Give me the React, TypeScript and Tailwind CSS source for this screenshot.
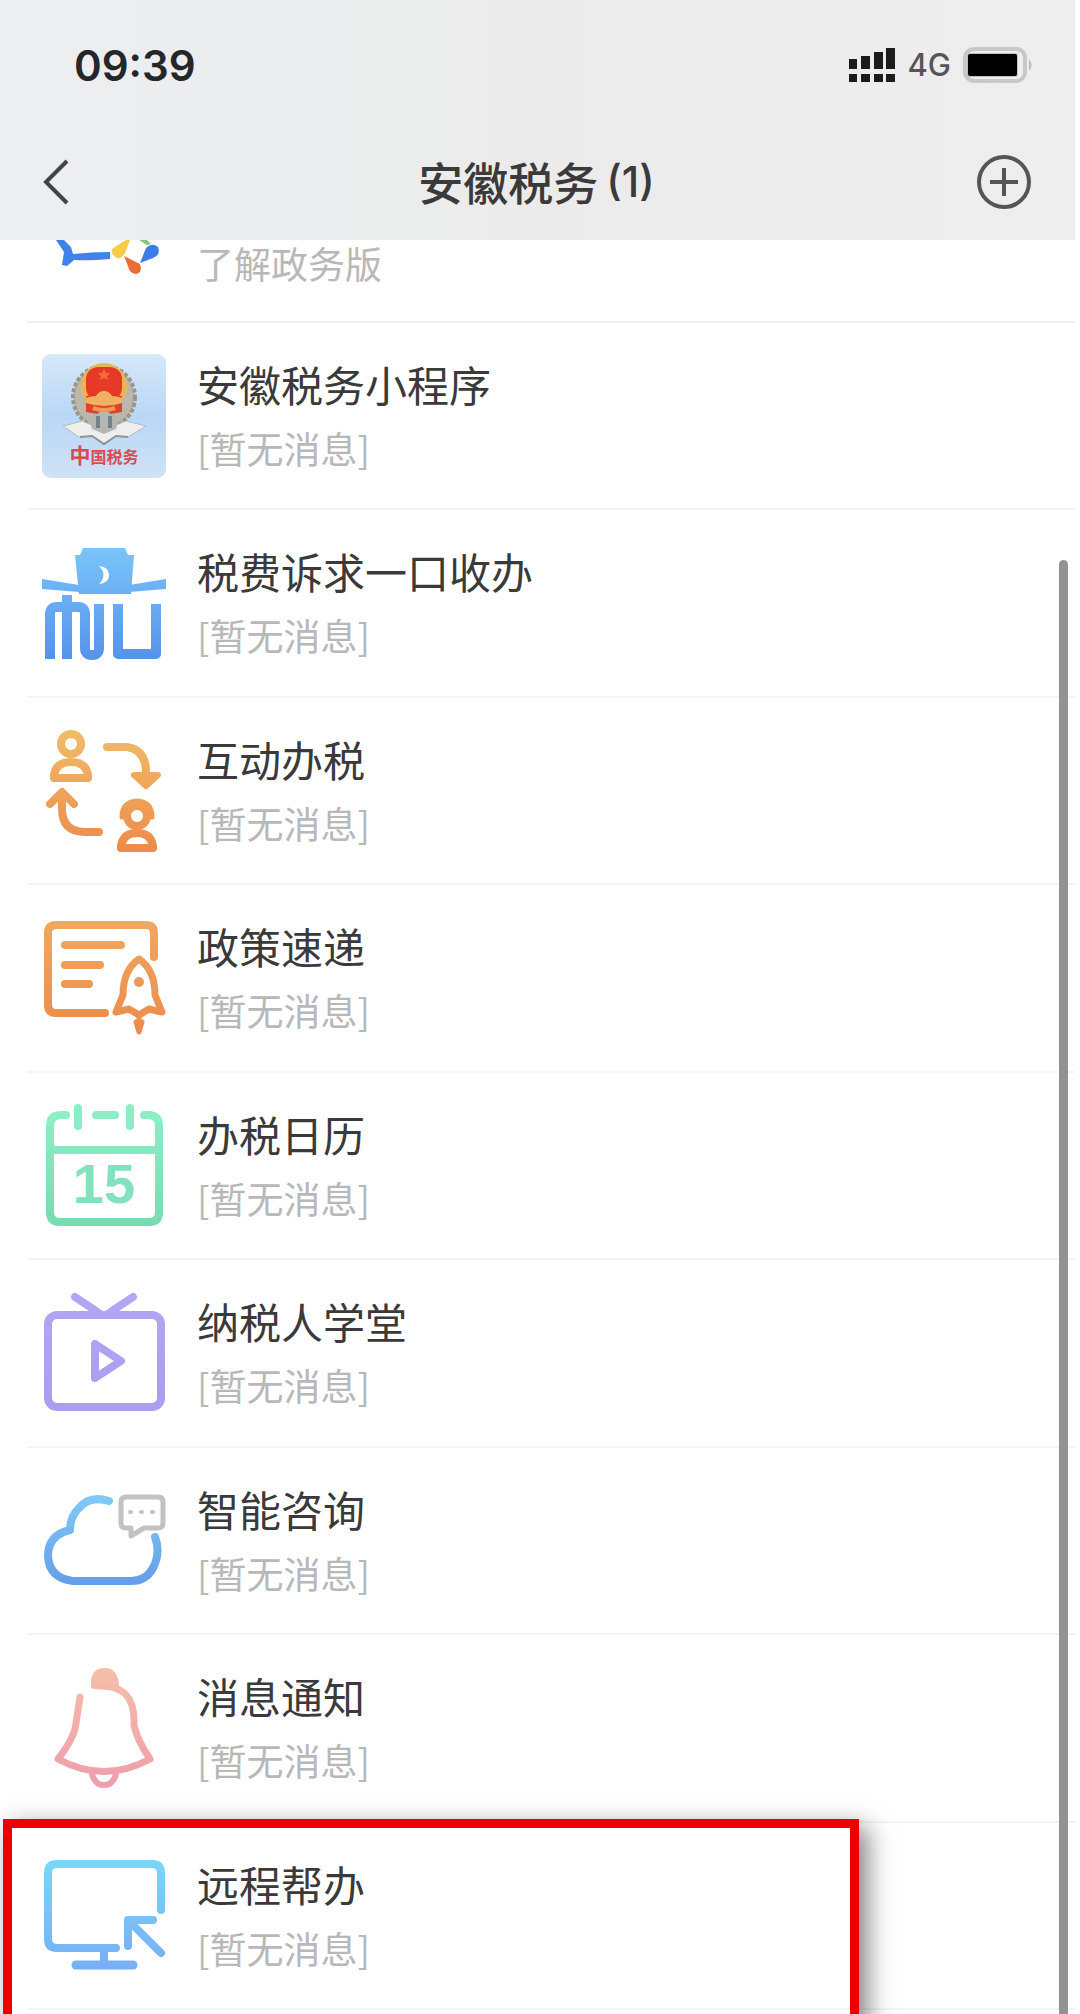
import type { ReactNode } from "react";

interface IService {
  name: string;
  icon: ReactNode;
  highlighted?: boolean;
}

interface IIconProps {
  id: string;
  from: string;
  to: string;
  children: ReactNode;
}

// Line icon with a vertical gradient stroke
function LineIcon({ id, from, to, children }: IIconProps) {
  return (
    <svg
      className="size-full overflow-visible"
      viewBox="0 0 124 124"
      fill="none"
      stroke={`url(#${id})`}
      strokeWidth="8"
      strokeLinecap="round"
      strokeLinejoin="round"
      aria-hidden="true"
    >
      <defs>
        <linearGradient id={id} gradientUnits="userSpaceOnUse" x1="0" y1="0" x2="0" y2="124">
          <stop offset="0" stopColor={from} />
          <stop offset="1" stopColor={to} />
        </linearGradient>
      </defs>
      {children}
    </svg>
  );
}

function EmblemIcon() {
  return (
    <svg className="size-full" viewBox="0 0 124 124" aria-hidden="true">
      <defs>
        <linearGradient id="sky" x1="0" y1="0" x2="0" y2="1">
          <stop offset="0" stopColor="#d6e8f9" />
          <stop offset="0.5" stopColor="#b9d7f6" />
          <stop offset="1" stopColor="#cfe2f5" />
        </linearGradient>
      </defs>
      <rect width="124" height="124" rx="9" fill="url(#sky)" />
      <circle cx="62" cy="43" r="31" fill="#bdb6aa" stroke="#9a948a" strokeWidth="4" strokeDasharray="4 2" />
      <path d="M21 72 40 67 62 76 84 67 104 72 86 83 74 82 62 90 50 82 37 83Z" fill="#eeeeec" stroke="#b4bbc2" strokeWidth="1" />
      <path d="m38 83 12-1 12 8 12-8 12 1" fill="none" stroke="#8b949d" strokeWidth="2" />
      <path d="M46 60h32l-4 15-12 5-12-5Z" fill="#b5b5b2" />
      <path d="M56 62v12M68 62v12" stroke="#74808a" strokeWidth="4" />
      <circle cx="62" cy="32" r="23" fill="#edb552" />
      <path d="M44 42h36v16l-11 2-7-5-7 5-11-2Z" fill="#dc432f" />
      <rect x="44" y="13" width="36" height="33" rx="12" fill="#e63a26" />
      <path d="m62 15 2 4h4l-3 3 1 4-4-2-4 2 1-4-3-3h4Z" fill="#ee6c38" />
      <path d="M44 44q6-2 10-2 3-5 8-5t8 5q4 0 10 2v5q-18 6-36 0Z" fill="#f2b062" />
      <path d="M51 54q11 4 22 0" fill="none" stroke="#f09a4e" strokeWidth="4" />
      <text
        x="62"
        y="109"
        textAnchor="middle"
        fontSize="16"
        fontWeight="700"
        fontFamily="'Noto Sans CJK SC', sans-serif"
        fill="#d94b50"
      >
        <tspan fontSize="21">中</tspan>国税务
      </text>
    </svg>
  );
}

function OfficialHatIcon() {
  return (
    <LineIcon id="hat" from="#7cc8fa" to="#5390ea">
      <g fill="url(#hat)" stroke="none">
        <path d="M41 7h42l3 7h6l-3 39H37L33 14h5Z" />
        <path d="M0 38 37 44v7L0 48ZM124 38 87 44v7l37-3Z" />
      </g>
      <path d="M57 25q9 9 0 18 10-1 10-9t-10-9Z" fill="#fff" stroke="none" />
      <g strokeWidth="10" strokeLinecap="butt">
        <path d="M8 118V73q0-7 7-7h21q7 0 7 7v34q0 7 7 7t7-7V63" />
        <path d="M25 54v64M76 63v50h38V63" />
      </g>
    </LineIcon>
  );
}

function InteractIcon() {
  return (
    <LineIcon id="interact" from="#f0bd69" to="#ed8a4a">
      <circle cx="29" cy="15" r="10" />
      <path d="M12 49v-3q2-13 17-13t17 13v3Z" />
      <path d="M65 18h20q20 3 19 28" />
      <path d="M92 46h24l-12 11Z" fill="url(#interact)" strokeWidth="6" />
      <path d="M57 103H42Q20 102 20 80V66M8 75l12-12 12 12" />
      <circle cx="95" cy="87" r="10" />
      <path d="M80 88q0-15 15-16 15 1 15 16" strokeWidth="5" />
      <path d="M79 119v-2q2-13 16-13t16 13v2Z" />
    </LineIcon>
  );
}

function PolicyIcon() {
  return (
    <LineIcon id="policy" from="#f0aa62" to="#ec8949">
      <path d="M63 97H14q-8 0-8-8V17q0-8 8-8h90q8 0 8 8v24" />
      <path d="M23 29h56M23 49h35M23 68h24" />
      <path d="M97 43q-16 11-16 36l-7 17 13-3 10 6 10-6 13 3-7-17q0-25-16-36Z" strokeWidth="7" />
      <circle cx="97" cy="66" r="5" fill="url(#policy)" stroke="none" />
      <path d="M97 100v8M94 106h6l-3 10Z" fill="url(#policy)" strokeWidth="5" />
    </LineIcon>
  );
}

function CalendarIcon() {
  return (
    <LineIcon id="calendar" from="#8df0c8" to="#78dab0">
      <path d="M24 11h-5Q8 11 8 22v86q0 10 10 10h89q10 0 10-10V22q0-11-11-11h-4" />
      <path d="M54 11h19M8 46h109M36 4v18M88 4v18" />
      <text
        x="62"
        y="99"
        textAnchor="middle"
        fontSize="56"
        fontWeight="700"
        fontFamily="'Liberation Sans', sans-serif"
        fill="#82e2bd"
        stroke="none"
      >
        15
      </text>
    </LineIcon>
  );
}

function ClassroomIcon() {
  return (
    <LineIcon id="classroom" from="#b5a5f4" to="#ab9cf0">
      <rect x="6" y="24" width="113" height="92" rx="9" />
      <path d="m33 6 24 16M91 6 67 22" />
      <path d="M53 53v34l26-17Z" />
    </LineIcon>
  );
}

function CloudIcon() {
  return (
    <LineIcon id="cloud" from="#84d2fb" to="#6094e4">
      <path d="M67 22Q48 16 37 29q-9 9-9 22Q6 56 6 77q1 22 25 25h58q15 0 22-13 8-15 2-31" />
      <g stroke="#c2c2c2">
        <path d="M84 18h32q5 0 5 5v21q0 5-5 5h-14l-13 8v-8h-5q-5 0-5-5V23q0-5 5-5Z" strokeWidth="5" />
        <path d="M88 33h1M99 33h1M110 33h1" strokeWidth="4" />
      </g>
    </LineIcon>
  );
}

function BellIcon() {
  return (
    <LineIcon id="bell" from="#f5c0a8" to="#ee9cae">
      <path d="M52 20q-1-15 10-15t12 14Z" fill="url(#bell)" strokeWidth="6" />
      <path d="M56 20q38-2 36 39 3 15 16 34-46 25-92 0 17-22 18-36l4-26" strokeWidth="7" />
      <path d="M50 108q3 11 12 11t12-11" strokeWidth="6" />
    </LineIcon>
  );
}

function RemoteIcon() {
  return (
    <LineIcon id="remote" from="#78daf7" to="#78aaf5">
      <path d="M74 94H15q-9 0-9-9V19q0-9 9-9h95q9 0 9 9v37" />
      <path d="M62 94v15" />
      <path d="M34 111h57" strokeWidth="9" />
      <path d="M111 66H86v26M87 67l32 32" />
    </LineIcon>
  );
}

const services: IService[] = [
  { name: "安徽税务小程序", icon: <EmblemIcon /> },
  { name: "税费诉求一口收办", icon: <OfficialHatIcon /> },
  { name: "互动办税", icon: <InteractIcon /> },
  { name: "政策速递", icon: <PolicyIcon /> },
  { name: "办税日历", icon: <CalendarIcon /> },
  { name: "纳税人学堂", icon: <ClassroomIcon /> },
  { name: "智能咨询", icon: <CloudIcon /> },
  { name: "消息通知", icon: <BellIcon /> },
  { name: "远程帮办", icon: <RemoteIcon />, highlighted: true },
];

function StatusBar() {
  return (
    <div className="flex h-[130px] items-center justify-between pl-[74px] pr-[41px]">
      <span className="font-['Inter',sans-serif] text-[42px] font-semibold text-[#24262a]">09:39</span>
      <div className="flex items-center gap-3">
        <svg className="h-9 w-[46px]" viewBox="0 0 46 36" fill="#1c1c1c" aria-hidden="true">
          <path d="M0 12h8v10H0ZM12 9h9v13h-9ZM25 5h9v17h-9ZM37 1h9v21h-9Z" />
          <path d="M0 27h8v8H0ZM12 27h9v8h-9ZM25 27h9v8h-9ZM37 27h9v8h-9Z" />
        </svg>
        <span className="font-['Inter',sans-serif] text-[31px] font-medium text-[#555]">4G</span>
        <svg className="h-9 w-[71px]" viewBox="0 0 71 36" aria-hidden="true">
          <rect x="2" y="2" width="60" height="32" rx="9" fill="none" stroke="#c8c8c8" strokeWidth="4" />
          <rect x="4" y="6" width="51" height="24" rx="2" fill="#c0c0c0" />
          <rect x="5" y="7" width="49" height="22" rx="2" fill="#000" />
          <path d="M66 12q5 6 0 12Z" fill="#bdbdbd" />
        </svg>
      </div>
    </div>
  );
}

function NavBar() {
  return (
    <div className="flex h-[104px] items-center justify-between pl-[41px] pr-[43px]">
      <button type="button" aria-label="返回" className="flex w-14 items-center">
        <svg className="h-12 w-8" viewBox="0 0 32 48" fill="none" stroke="#444" strokeWidth="4" aria-hidden="true">
          <path d="M26 3 5 24l21 21" />
        </svg>
      </button>
      <h1 className="flex items-center gap-2 whitespace-nowrap text-[45px] font-medium leading-[60px] text-[#3a3a3a]">
        安徽税务
        <span className="font-['Inter',sans-serif] text-[42px]">(1)</span>
      </h1>
      <button type="button" aria-label="添加" className="w-14">
        <svg className="size-14" viewBox="0 0 56 56" fill="none" stroke="#555" strokeWidth="4" aria-hidden="true">
          <circle cx="28" cy="28" r="25" />
          <path d="M28 14v28M14 28h28" />
        </svg>
      </button>
    </div>
  );
}

function ServiceRow({ name, icon, highlighted }: IService) {
  return (
    <li className="relative h-[187px] border-b-2 border-[#f4f4f4] even:h-[188px]">
      <a href="#" className="flex h-full items-start gap-[31px] pl-[15px] pt-[31px]">
        <span className="size-[124px] shrink-0">{icon}</span>
        <span className="flex flex-col gap-1.5">
          <span className="text-[42px] leading-[60px] text-[#3a3a3a]">{name}</span>
          <span className="text-[37px] leading-[56px] text-[#b8b8b8]">[暂无消息]</span>
        </span>
      </a>
      {highlighted && (
        <div className="pointer-events-none absolute -left-6 -top-1 h-[240px] w-[calc(80%+18px)] border-[9px] border-[#ee0000] shadow-[8px_8px_24px_rgba(0,0,0,0.5)]" />
      )}
    </li>
  );
}

export default function App() {
  return (
    <div className="h-screen overflow-hidden bg-white pr-[5px] font-['Noto_Sans_CJK_SC',sans-serif]">
      <div className="flex h-full flex-col">
        <header className="shrink-0 bg-linear-to-r from-[#eceef0] via-[#ebebeb] to-[#eeeeee] pb-[6px]">
          <StatusBar />
          <NavBar />
        </header>

        <main className="relative min-h-0 flex-1">
          {/* Last visible part of the entry scrolled under the header */}
          <div className="ml-[27px] flex h-[83px] items-start gap-[31px] border-b-2 border-[#f1f1f1] pl-[15px]">
            <svg className="h-9 w-[124px] shrink-0" viewBox="0 0 124 36" aria-hidden="true">
              <path d="M14 0h8l7 7 2 7q18-2 37-2v7q-20 2-36 1l-7 6-5-1 2-13Z" fill="#3f82ea" />
              <path d="M70 9 79 3l5-3h4l-5 13q-3 6-8 5-6-3-5-9Z" fill="#f8cb48" />
              <path d="M97 0h8l4 4-4 1Z" fill="#83c77b" />
              <path d="m98 23 6-15q6-6 12-1 3 8-5 11Z" fill="#3c7de8" />
              <path d="m82 16 16 8q3 9-4 10-7-1-8-8Z" fill="#ea6d37" />
            </svg>
            <span className="text-[37px] leading-[46px] text-[#b8b8b8]">了解政务版</span>
          </div>

          <ul className="pl-[27px]">
            {services.map((service) => (
              <ServiceRow key={service.name} {...service} />
            ))}
          </ul>

          {/* Scroll indicator */}
          <div className="absolute bottom-0 right-[7px] top-[320px] w-[9px] rounded-t-full bg-[#929292]" />
        </main>
      </div>
    </div>
  );
}
